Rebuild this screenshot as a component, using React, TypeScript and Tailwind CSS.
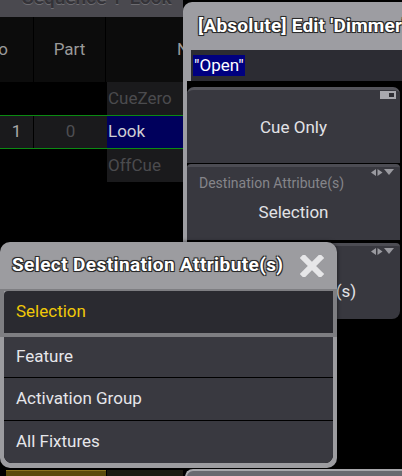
const outline = '[text-shadow:-1px_-1px_0_#2b2b2b,1px_-1px_0_#2b2b2b,-1px_1px_0_#2b2b2b,1px_1px_0_#2b2b2b,0_0_2px_#2b2b2b]'

const ArrowIcons = () => (
    <svg width="24" height="7" viewBox="0 0 24 7" className="absolute right-[5px] top-[2px]">
        <polygon points="0,3.5 5,0 5,7" fill="#9a9aa0" />
        <polygon points="6.5,0 11.5,3.5 6.5,7" fill="#9a9aa0" />
        <polygon points="13,0 23,0 18,6" fill="#9a9aa0" />
    </svg>
)

const ToggleIcon = () => (
    <svg width="16" height="8" viewBox="0 0 16 8" className="absolute right-[4px] top-[1px]">
        <rect x="0" y="0" width="16" height="8" fill="#a8a8ae" />
        <rect x="9" y="2" width="5" height="4" fill="#2e2e34" />
    </svg>
)

const SequenceSheet = () => (
    <div className="flex w-[183px] flex-col">
        <div className="h-[17px] overflow-hidden bg-[#4a494f] pl-[22px]">
            <div className="-mt-[16px] text-[19px] font-bold whitespace-nowrap text-[#343338] [text-shadow:0_1px_0_#6e6d72]">Sequence 1 'Look'</div>
        </div>
        <div className="flex h-[65px] bg-[#0c0c0c] text-[17px] text-[#9a9a9a]">
            <div className="flex w-[34px] items-center justify-end overflow-hidden border-r border-black pr-[25px]">
                <span>No</span>
            </div>
            <div className="flex w-[72px] items-center justify-center border-r border-black">Part</div>
            <div className="flex flex-1 items-center overflow-hidden pl-[71px]">Name</div>
        </div>
        <div className="flex h-[33px] text-[17px]">
            <div className="w-[107px] bg-black" />
            <div className="flex flex-1 items-center bg-[#1a1a1c] pl-[1px] text-[#4b4b4e]">CueZero</div>
        </div>
        <div className="flex h-[34px] border-y border-[#0b8a12] text-[17px]">
            <div className="flex w-[34px] items-center justify-center border-r border-black bg-[#1a1a1c] text-[#a8a8a8]">1</div>
            <div className="flex w-[73px] items-center justify-center bg-[#1a1a1c] text-[#4e4e52]">0</div>
            <div className="flex flex-1 items-center bg-[#00005c] pl-[1px] text-[#cfcfd4]">Look</div>
        </div>
        <div className="flex h-[33px] text-[17px]">
            <div className="w-[107px] bg-black" />
            <div className="flex flex-1 items-center bg-[#1a1a1c] pl-[1px] text-[#4b4b4e]">OffCue</div>
        </div>
    </div>
)

const EditWindow = () => (
    <div className="absolute left-[183px] top-[2px] flex w-[219px] flex-col">
        <div className="flex h-[48px] items-center overflow-hidden rounded-tl-[9px] bg-[#9d9da2] pl-[15px]">
            <span className={`text-[19px] font-bold tracking-[0.2px] whitespace-nowrap text-white ${outline}`}>[Absolute] Edit 'Dimmer'</span>
        </div>
        <div className="flex h-[31px] items-center border-l-[8px] border-[#9d9da2] bg-[#2c2c33] pl-[2px]">
            <span className="bg-[#000080] px-[1px] text-[17px] leading-[21px] text-white">"Open"</span>
        </div>
        <div className="flex flex-col gap-[1px] border-l-[4px] border-[#9d9da2] bg-black pt-[6px] pr-[2px]">
            <div className="relative flex h-[76px] items-center justify-center rounded-t-[7px] border-t-[3px] border-[#55555c] bg-[#38383f] pt-[3px] text-[17px] text-[#e2e2e6]">
                <ToggleIcon />
                Cue Only
            </div>
            <div className="relative flex h-[76px] flex-col items-center rounded-t-[4px] border-t-[3px] border-[#4c4c53] bg-[#38383f]">
                <ArrowIcons />
                <span className="mt-[6px] self-start pl-[12px] text-[14px] text-[#85858a]">Destination Attribute(s)</span>
                <span className="mt-[6px] text-[17px] text-[#e2e2e6]">Selection</span>
            </div>
            <div className="relative mt-[2px] flex h-[76px] flex-col items-center rounded-t-[4px] rounded-br-[8px] border-t-[3px] border-[#4c4c53] bg-[#38383f]">
                <ArrowIcons />
                <span className="mt-[6px] self-start pl-[12px] text-[14px] text-[#85858a]">Source</span>
                <span className="relative -left-[4px] mt-[6px] text-[17px] text-[#e2e2e6]">Same Attribute(s)</span>
            </div>
        </div>
    </div>
)

const items = ['Feature', 'Activation Group', 'All Fixtures']

const SelectPopup = () => (
    <div className="absolute left-0 top-[242px] flex h-[226px] w-[337px] flex-col rounded-[10px] bg-[#9c9ca0] shadow-[0_0_4px_rgba(0,0,0,0.6)]">
        <div className="flex h-[47px] shrink-0 items-center justify-between pl-[12px] pr-[13px]">
            <span className={`text-[19px] font-bold tracking-[0.4px] whitespace-nowrap text-white ${outline}`}>Select Destination Attribute(s)</span>
            <svg width="24" height="22" viewBox="0 0 24 22">
                <path d="M4 3 L20 19 M20 3 L4 19" stroke="#e6e6e8" strokeWidth="6" strokeLinecap="square" />
            </svg>
        </div>
        <div className="flex h-[48px] shrink-0 border-x-[4px] border-b-[4px] border-t-[2px] border-[#7e7e82]">
            <div className="flex flex-1 items-center rounded-tl-[4px] bg-[#2a2a30] pl-[12px] text-[17px] text-[#f0c808]">Selection</div>
        </div>
        <div className="mx-[4px] flex flex-col gap-[1px] overflow-hidden rounded-b-[8px] bg-black">
            {items.map((item, i) => (
                <div key={item} className={`flex items-center bg-[#393940] pl-[12px] text-[17px] text-[#e6e6ea] ${i === 0 ? 'h-[40px]' : 'h-[42px]'}`}>
                    {item}
                </div>
            ))}
        </div>
    </div>
)

export default function App() {
    return (
        <div className="relative h-[476px] w-[402px] overflow-hidden bg-black font-['Roboto',sans-serif]">
            <SequenceSheet />
            <EditWindow />
            <SelectPopup />
            <div className="absolute left-[6px] top-[470px] h-[6px] w-[100px] border-t border-[#8a7420] bg-[#5a4a0c]" />
            <div className="absolute left-[107px] top-[470px] h-[6px] w-[76px] bg-[#1c1a10]" />
            <div className="absolute left-[185px] top-[469px] h-[10px] w-[220px] rounded-tl-[8px] border-t-2 border-l-2 border-[#a8a8ac] bg-[#6a6a70]" />
        </div>
    )
}
